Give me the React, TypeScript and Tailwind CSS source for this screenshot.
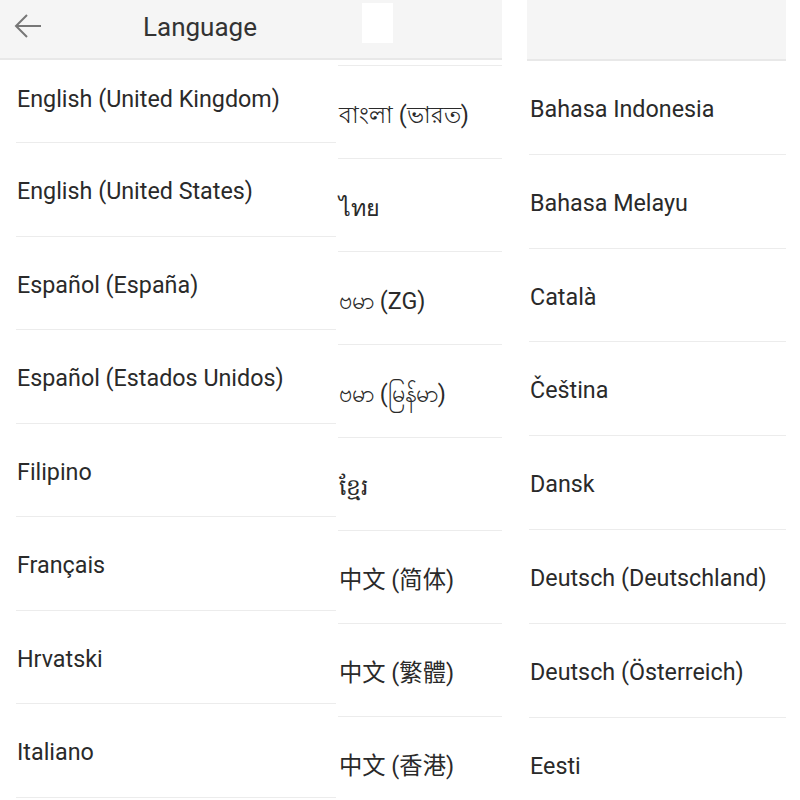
const colOne = [
  'English (United Kingdom)',
  'English (United States)',
  'Español (España)',
  'Español (Estados Unidos)',
  'Filipino',
  'Français',
  'Hrvatski',
  'Italiano',
]

const colTwo = [
  'বাংলা (ভারত)',
  'ไทย',
  'ဗမာ (ZG)',
  'ဗမာ (မြန်မာ)',
  'ខ្មែរ',
  '中文 (简体)',
  '中文 (繁體)',
  '中文 (香港)',
]

const colThree = [
  'Bahasa Indonesia',
  'Bahasa Melayu',
  'Català',
  'Čeština',
  'Dansk',
  'Deutsch (Deutschland)',
  'Deutsch (Österreich)',
  'Eesti',
]

function Row({ label, first }: { label: string, first?: boolean }) {
  return (
    <div
      className={
        first
          ? 'h-[83px] pb-[9px] flex items-center border-b border-[#ececec] shrink-0'
          : 'h-[93.5px] flex items-center border-b border-[#ececec] shrink-0'
      }
    >
      <span className="pl-[1px] mt-[5px] whitespace-nowrap">{label}</span>
    </div>
  )
}

export default function App() {
  return (
    <div
      className="w-[800px] h-[800px] bg-white overflow-hidden flex text-[23.3px] text-[#2a2a2a]"
      style={{ fontFamily: 'Roboto, "Noto Sans", "Noto Sans CJK SC", sans-serif' }}
    >
      {/* screen 1 */}
      <div className="w-[336px] shrink-0 flex flex-col">
        <div className="h-[60px] bg-[#f5f5f5] border-b-2 border-[#e8e8e8] flex items-center shrink-0">
          <svg className="ml-[14px] mt-[-6px]" width="28" height="28" viewBox="0 0 28 28" fill="none" stroke="#777" strokeWidth="2">
            <path d="M27 14H3" />
            <path d="M13 3L2 14l11 11" />
          </svg>
          <span className="ml-[101px] mt-[-4px] text-[26px] text-[#333]">Language</span>
        </div>
        <div className="pl-[16px] flex flex-col">
          {colOne.map((l, i) => <Row key={l} label={l} first={i === 0} />)}
        </div>
      </div>

      {/* screen 2 */}
      <div className="w-[166px] shrink-0 flex flex-col">
        <div className="h-[60px] bg-[#f5f5f5] border-b-2 border-[#e8e8e8] shrink-0">
          <div className="mt-[3px] ml-[26px] w-[31px] h-[40px] bg-white" />
        </div>
        <div className="mt-[5px] pl-[2px] flex flex-col">
          <div className="border-t border-[#ececec]" />
          {colTwo.map(l => (
            <div key={l} className="h-[93px] flex items-center border-b border-[#ececec] shrink-0">
              <span className="pl-[1px] mt-[6px] whitespace-nowrap">{l}</span>
            </div>
          ))}
        </div>
      </div>

      {/* screen 3 */}
      <div className="ml-[25px] w-[259px] shrink-0 flex flex-col">
        <div className="h-[61px] bg-[#f5f5f5] border-b-2 border-[#e8e8e8] shrink-0" />
        <div className="pl-[2px] flex flex-col">
          {colThree.map(l => (
            <div key={l} className="h-[93.8px] flex items-center border-b border-[#ececec] shrink-0">
              <span className="pl-[1px] mt-[4px] whitespace-nowrap">{l}</span>
            </div>
          ))}
        </div>
      </div>
    </div>
  )
}
